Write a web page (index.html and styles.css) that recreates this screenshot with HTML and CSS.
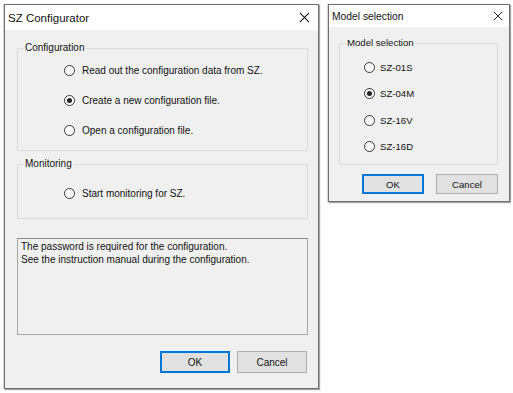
FILE: index.html
```html
<!DOCTYPE html>
<html>
<head>
<meta charset="utf-8">
<link rel="stylesheet" href="styles.css">
</head>
<body>
<div class="screen">
  <div class="dialog dialog-main">
    <div class="titlebar">
      <span class="title">SZ Configurator</span>
      <svg class="close" width="12" height="12" viewBox="0 0 12 12"><path d="M1 1L11 11M11 1L1 11" stroke="#111" stroke-width="1.1" fill="none"/></svg>
    </div>
    <div class="body">
      <fieldset class="group group-config">
        <legend>Configuration</legend>
        <div class="row"><span class="radio"></span><span>Read out the configuration data from SZ.</span></div>
        <div class="row"><span class="radio checked"></span><span>Create a new configuration file.</span></div>
        <div class="row"><span class="radio"></span><span>Open a configuration file.</span></div>
      </fieldset>
      <fieldset class="group group-monitor">
        <legend>Monitoring</legend>
        <div class="row"><span class="radio"></span><span>Start monitoring for SZ.</span></div>
      </fieldset>
      <div class="textbox">The password is required for the configuration.<br>See the instruction manual during the configuration.</div>
      <div class="buttons">
        <button class="btn default">OK</button>
        <button class="btn">Cancel</button>
      </div>
    </div>
  </div>
  <div class="dialog dialog-model">
    <div class="titlebar">
      <span class="title">Model selection</span>
      <svg class="close" width="12" height="12" viewBox="0 0 12 12"><path d="M1 1L11 11M11 1L1 11" stroke="#111" stroke-width="1.1" fill="none"/></svg>
    </div>
    <div class="body">
      <fieldset class="group group-model">
        <legend>Model selection</legend>
        <div class="row"><span class="radio"></span><span>SZ-01S</span></div>
        <div class="row"><span class="radio checked"></span><span>SZ-04M</span></div>
        <div class="row"><span class="radio"></span><span>SZ-16V</span></div>
        <div class="row"><span class="radio"></span><span>SZ-16D</span></div>
      </fieldset>
      <div class="buttons">
        <button class="btn default">OK</button>
        <button class="btn">Cancel</button>
      </div>
    </div>
  </div>
</div>
</body>
</html>
```
FILE: styles.css
```css
* { box-sizing: border-box; }
html, body { margin: 0; padding: 0; background: #fff; }
body {
  font-family: "Liberation Sans", Arial, sans-serif;
  color: #111;
  width: 513px;
  height: 393px;
  overflow: hidden;
}
.screen {
  display: flex;
  align-items: flex-start;
  padding: 4px 0 0 4px;
  gap: 9px;
}
.dialog {
  background: #f0f0f0;
  border: 1px solid #6f6f6f;
  box-shadow: 1px 1px 1px rgba(0,0,0,0.35), -1px 0 1px rgba(0,0,0,0.15);
}
.dialog-main { width: 315px; height: 385px; }
.dialog-model { width: 182px; height: 198px; }
.titlebar {
  background: #fff;
  display: flex;
  align-items: center;
  justify-content: space-between;
  padding: 0 8px 0 3px;
}
.dialog-main .titlebar { height: 25px; font-size: 11.5px; }
.dialog-model .titlebar { height: 22px; font-size: 10.3px; padding-right: 6px; }
.close { display: block; }
.dialog-main .close { width: 11px; height: 11px; }
.dialog-model .close { width: 10px; height: 10px; }

.dialog-main .body { padding: 12px 10px 0 12px; font-size: 10px; }
.dialog-model .body { padding: 10px 11px 0 10px; font-size: 9.6px; }

.group {
  margin: 0;
  border: 1px solid #dcdcdc;
  padding: 0;
  min-width: 0;
}
.group legend {
  margin-left: 5px;
  padding: 0 2px;
  line-height: 12px;
}
.row {
  display: flex;
  align-items: center;
  gap: 7px;
}
.radio {
  width: 11px;
  height: 11px;
  border: 1px solid #333;
  border-radius: 50%;
  background: #fff;
  display: flex;
  align-items: center;
  justify-content: center;
  flex: none;
}
.radio.checked::after {
  content: "";
  width: 5px;
  height: 5px;
  border-radius: 50%;
  background: #222;
}

.group-config { padding: 1px 0 5px 0; }
.group-config .row { height: 30px; padding-left: 46px; }
.group-monitor { margin-top: 7px; padding: 0 0 2px 0; }
.group-monitor .row { height: 46px; padding-left: 46px; }

.textbox {
  margin-top: 19px;
  height: 97px;
  border: 1px solid #a6a6a6;
  border-top-color: #8a8a8a;
  padding: 1px 3px;
  line-height: 13px;
}

.buttons {
  display: flex;
  justify-content: flex-end;
}
.btn {
  font-family: inherit;
  font-size: inherit;
  color: #111;
  background: #e1e1e1;
  border: 1px solid #adadad;
  padding: 0;
  margin: 0;
}
.btn.default {
  border-color: #0078d7;
  box-shadow: inset 0 0 0 1px #0078d7;
}
.dialog-main .buttons { margin-top: 16px; gap: 7px; padding-right: 1px; }
.dialog-main .btn { width: 70px; height: 22px; }

.group-model { padding: 5px 0 4px 0; }
.group-model .row { height: 26.5px; gap: 5px; padding-left: 24px; }
.dialog-model .buttons { margin-top: 9px; gap: 12px; }
.dialog-model .btn { width: 62px; height: 20px; }
```
